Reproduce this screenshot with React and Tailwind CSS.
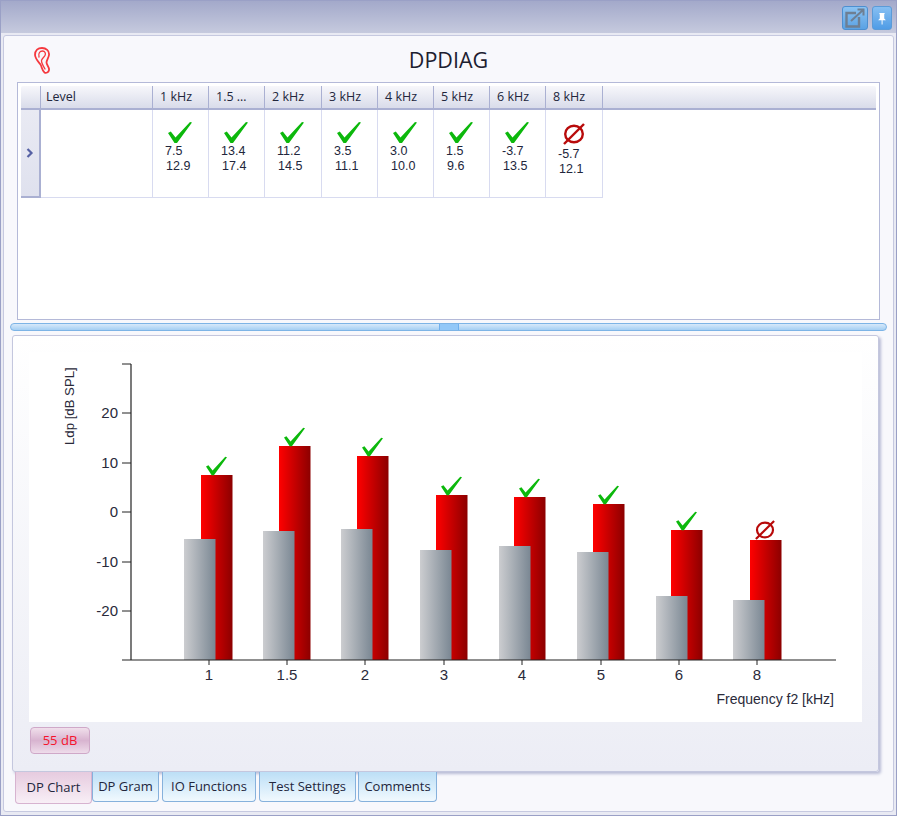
import React from 'react'

const columns = [
  { label: '1 kHz', top: '7.5', bottom: '12.9', ok: true },
  { label: '1.5 …', top: '13.4', bottom: '17.4', ok: true },
  { label: '2 kHz', top: '11.2', bottom: '14.5', ok: true },
  { label: '3 kHz', top: '3.5', bottom: '11.1', ok: true },
  { label: '4 kHz', top: '3.0', bottom: '10.0', ok: true },
  { label: '5 kHz', top: '1.5', bottom: '9.6', ok: true },
  { label: '6 kHz', top: '-3.7', bottom: '13.5', ok: true },
  { label: '8 kHz', top: '-5.7', bottom: '12.1', ok: false },
]

// x and top of each bar, in page pixels
const bars = [
  { label: '1', tick: 209, red: 201, redTop: 475, grey: 184, greyTop: 539, ok: true },
  { label: '1.5', tick: 287, red: 279, redTop: 446, grey: 263, greyTop: 531, ok: true },
  { label: '2', tick: 365, red: 357, redTop: 456, grey: 341, greyTop: 529, ok: true },
  { label: '3', tick: 444, red: 436, redTop: 495, grey: 420, greyTop: 550, ok: true },
  { label: '4', tick: 522, red: 514, redTop: 497, grey: 499, greyTop: 546, ok: true },
  { label: '5', tick: 601, red: 593, redTop: 504, grey: 577, greyTop: 552, ok: true },
  { label: '6', tick: 679, red: 671, redTop: 530, grey: 656, greyTop: 596, ok: true },
  { label: '8', tick: 757, red: 750, redTop: 540, grey: 733, greyTop: 600, ok: false },
]

const yTicks = [
  { label: '20', y: 413 },
  { label: '10', y: 463 },
  { label: '0', y: 512 },
  { label: '-10', y: 562 },
  { label: '-20', y: 611 },
]

const tabs = [
  { label: 'DP Gram', className: 'w-[67px]' },
  { label: 'IO Functions', className: 'w-[94px] ml-[3px]' },
  { label: 'Test Settings', className: 'w-[97px] ml-[3px]' },
  { label: 'Comments', className: 'w-[79px] ml-[2px]' },
]

const CheckShape = () => (
  <polygon points="0,11 2.8,9.5 7.5,15.5 22,0 24,0.6 9,21 6.5,21" fill="#0cb80c" />
)

const NoShape = () => (
  <g fill="none" stroke="#b80a0a" strokeWidth="2.4">
    <ellipse cx="11" cy="11" rx="8.8" ry="8.2" />
    <line x1="1" y1="21" x2="21" y2="1" />
  </g>
)

const StatusIcon = ({ ok }) =>
  ok ? (
    <svg viewBox="0 0 24 21" className="ml-[15px] block h-[21px] w-[24px]">
      <CheckShape />
    </svg>
  ) : (
    <svg viewBox="0 0 22 22" className="mb-[3px] ml-[17px] block h-[22px] w-[22px] translate-y-[1px]">
      <NoShape />
    </svg>
  )

const Ear = () => (
  <svg viewBox="0 0 17 27" className="block h-[27px] w-[17px]" fill="none" stroke="#f5383e" strokeLinecap="round">
    <path strokeWidth="1.8" d="M1 8C1 3 4 1 8 1c4 0 7.500 2.500 7 7-.4 3-2.500 5-2.500 7.500 0 2.500 3 4.500 2.500 7.500-.4 2.500-3 3.500-4.500 2.500C8.500 24 8 21 7 18.500 6 16 1.500 13 1 8z" />
    <path strokeWidth="1.3" d="M5 10C4 6 6 4 8.500 4c2.500 0 3.500 2.500 2.500 4.500-1 2-3 2.500-3.500 5-.2 2.500 2 6 3.500 8.500" />
  </svg>
)

const Chart = () => (
  <svg viewBox="29 352 833 370" className="block h-[370px] w-[833px] bg-white">
    <defs>
      <linearGradient id="redBar" x1="0" x2="1" y1="0" y2="0">
        <stop offset="0" stopColor="#ff0000" />
        <stop offset="1" stopColor="#8c0000" />
      </linearGradient>
      <linearGradient id="greyBar" x1="0" x2="1" y1="0" y2="0">
        <stop offset="0" stopColor="#cccdd0" />
        <stop offset="1" stopColor="#7a8793" />
      </linearGradient>
    </defs>

    {bars.map((bar) => (
      <g key={bar.label}>
        <rect x={bar.red} y={bar.redTop} width="31.5" height={660 - bar.redTop} fill="url(#redBar)" />
        <rect x={bar.grey} y={bar.greyTop} width="31.5" height={660 - bar.greyTop} fill="url(#greyBar)" />
        {bar.ok ? (
          <svg x={bar.red + 5} y={bar.redTop - 19} width="21" height="20" viewBox="0 0 24 21">
            <CheckShape />
          </svg>
        ) : (
          <svg x={bar.red + 5} y={bar.redTop - 20} width="20" height="20" viewBox="0 0 22 22">
            <NoShape />
          </svg>
        )}
        <line x1={bar.tick} x2={bar.tick} y1="660" y2="665" stroke="#222" />
        <text x={bar.tick} y="680" textAnchor="middle" fontSize="15" fill="#2a2a3a" fontFamily="'Liberation Sans', sans-serif">
          {bar.label}
        </text>
      </g>
    ))}

    <line x1="131" x2="131" y1="364" y2="660" stroke="#222" strokeWidth="1.2" />
    <line x1="122" x2="836" y1="660" y2="660" stroke="#222" strokeWidth="1.2" />
    <line x1="122" x2="131" y1="364" y2="364" stroke="#222" />
    {yTicks.map((tick) => (
      <g key={tick.label}>
        <line x1="122" x2="131" y1={tick.y} y2={tick.y} stroke="#222" />
        <text x="118" y={tick.y + 5} textAnchor="end" fontSize="15" fill="#2a2a3a" fontFamily="'Liberation Sans', sans-serif">
          {tick.label}
        </text>
      </g>
    ))}

    <text transform="translate(74 445) rotate(-90)" fontSize="13.2" fill="#2a2a3a" fontFamily="'Liberation Sans', sans-serif">
      Ldp [dB SPL]
    </text>
    <text x="834" y="704" textAnchor="end" fontSize="14" fill="#2a2a3a" fontFamily="'Liberation Sans', sans-serif">
      Frequency f2 [kHz]
    </text>
  </svg>
)

export default function App() {
  return (
    <div className="flex h-[816px] w-[897px] flex-col overflow-hidden border border-[#9aa0c6] bg-[#e9eaf3] font-['Open_Sans',sans-serif] text-[12.5px] text-[#22263c]">
      {/* Title bar */}
      <div className="flex h-[32px] shrink-0 items-start justify-end gap-[4px] bg-gradient-to-b from-[#a3a9ca] to-[#c6cade] pt-[5px] pr-[4px]">
        <div className="flex h-[24px] w-[26px] items-center justify-center rounded-[3px] border border-[#4d8fd0] bg-gradient-to-b from-[#8cc3f2] to-[#5aa2e4]">
          <svg viewBox="0 0 20 20" className="h-[20px] w-[20px]" fill="none" stroke="#6e7f93" strokeWidth="2.4">
            <path d="M11 5H1.500v13.500H14V9" />
            <path d="M6 13L18 2M12.500 1.500h6v6" strokeWidth="2" />
          </svg>
        </div>
        <div className="flex h-[24px] w-[20px] items-center justify-center rounded-[3px] border border-[#5b9bd8] bg-gradient-to-b from-[#86bff2] to-[#4f9ce6]">
          <svg viewBox="0 0 10 14" className="h-[13px] w-[10px]" fill="#fff">
            <path d="M2 1h6v1H7.400v5L9 8.500V9H5.600v4.500h-1V9H1v-.5L2.600 7V2H2z" />
          </svg>
        </div>
      </div>

      {/* Main panel */}
      <div className="mx-[2px] mt-[2px] flex h-[777px] shrink-0 flex-col rounded-[3px] border border-[#c6c9e0] bg-[#f8f8fc]">
        <div className="relative flex h-[46px] shrink-0 items-center justify-center pt-[2px] text-[21.5px] text-[#1d2030]">
          <div className="absolute top-[11px] left-[30px]">
            <Ear />
          </div>
          DPDIAG
        </div>

        {/* Grid */}
        <div className="ml-[13px] h-[238px] w-[863px] shrink-0 border border-[#b4b9d8] bg-white px-[3px] pt-[3px]">
          <div className="grid h-[24px] grid-cols-[20px_112px_56px_56px_57px_56px_56px_56px_56px_57px_1fr] rounded-t-[2px] border-b-2 border-[#aab0d2] bg-gradient-to-b from-[#f7f7fb] to-[#d9dcea] leading-[22px]">
            <div className="border-r border-[#aab0d2]" />
            <div className="border-r border-[#aab0d2] pl-[5px]">Level</div>
            {columns.map((col) => (
              <div key={col.label} className="border-r border-[#aab0d2] pl-[7px]">
                {col.label}
              </div>
            ))}
            <div />
          </div>
          <div className="grid h-[88px] grid-cols-[20px_112px_56px_56px_57px_56px_56px_56px_56px_57px_1fr] font-['Liberation_Sans',sans-serif] text-[12.5px] leading-[15px]">
            <div className="flex items-center justify-center border-r-2 border-b-2 border-[#aab0d2] bg-gradient-to-b from-[#e9eaf3] to-[#dfe1ee]">
              <svg viewBox="0 0 8 10" className="h-[10px] w-[8px]" fill="none" stroke="#5661a4" strokeWidth="2.2">
                <path d="M1.500 1l4 4-4 4" />
              </svg>
            </div>
            <div className="border-r border-b border-[#d8dbf0]" />
            {columns.map((col) => (
              <div key={col.label} className="border-r border-b border-[#d8dbf0] pt-[12px]">
                <StatusIcon ok={col.ok} />
                <div className="mt-[1px] pl-[12px]">{col.top}</div>
                <div className="pl-[13px]">{col.bottom}</div>
              </div>
            ))}
            <div />
          </div>
        </div>

        {/* Splitter */}
        <div className="mt-[3px] ml-[6px] flex h-[8px] w-[877px] shrink-0 justify-center rounded-full border border-[#7db4e6] bg-gradient-to-b from-[#d7e9fa] to-[#a5cff3]">
          <div className="h-full w-[20px] border-x border-[#6fb0ee] bg-[#93c8f8]" />
        </div>

        {/* Lower panel */}
        <div className="mt-[4px] ml-[8px] flex h-[437px] w-[867px] shrink-0 flex-col rounded-[3px] border border-[#c4c7de] bg-gradient-to-b from-white to-[#ecedf5] pt-[16px] pl-[16px] shadow-[2px_2px_3px_#b9bcd6]">
          <Chart />
          <button className="mt-[5px] ml-[1px] h-[27px] w-[60px] rounded-[4px] border border-[#cfa8c8] bg-gradient-to-b from-[#f0dfeb] via-[#d8b4d0] to-[#eedcea] text-[13px] text-[#f5142c]">
            55 dB
          </button>
        </div>

        {/* Tabs */}
        <div className="ml-[11px] flex h-[32px] shrink-0 items-start text-[13px]">
          <div className="relative z-10 flex h-[32px] w-[77px] items-center justify-center rounded-b-[4px] border border-t-0 border-[#d7b3d0] bg-gradient-to-b from-[#e6cbdf] to-[#f8eff6]">
            DP Chart
          </div>
          {tabs.map((tab) => (
            <div
              key={tab.label}
              className={`flex h-[30px] items-center justify-center rounded-b-[4px] border border-t-0 border-[#86b1dc] bg-gradient-to-b from-[#bcdff6] to-[#f1f9fe] ${tab.className}`}
            >
              {tab.label}
            </div>
          ))}
        </div>
      </div>
    </div>
  )
}
